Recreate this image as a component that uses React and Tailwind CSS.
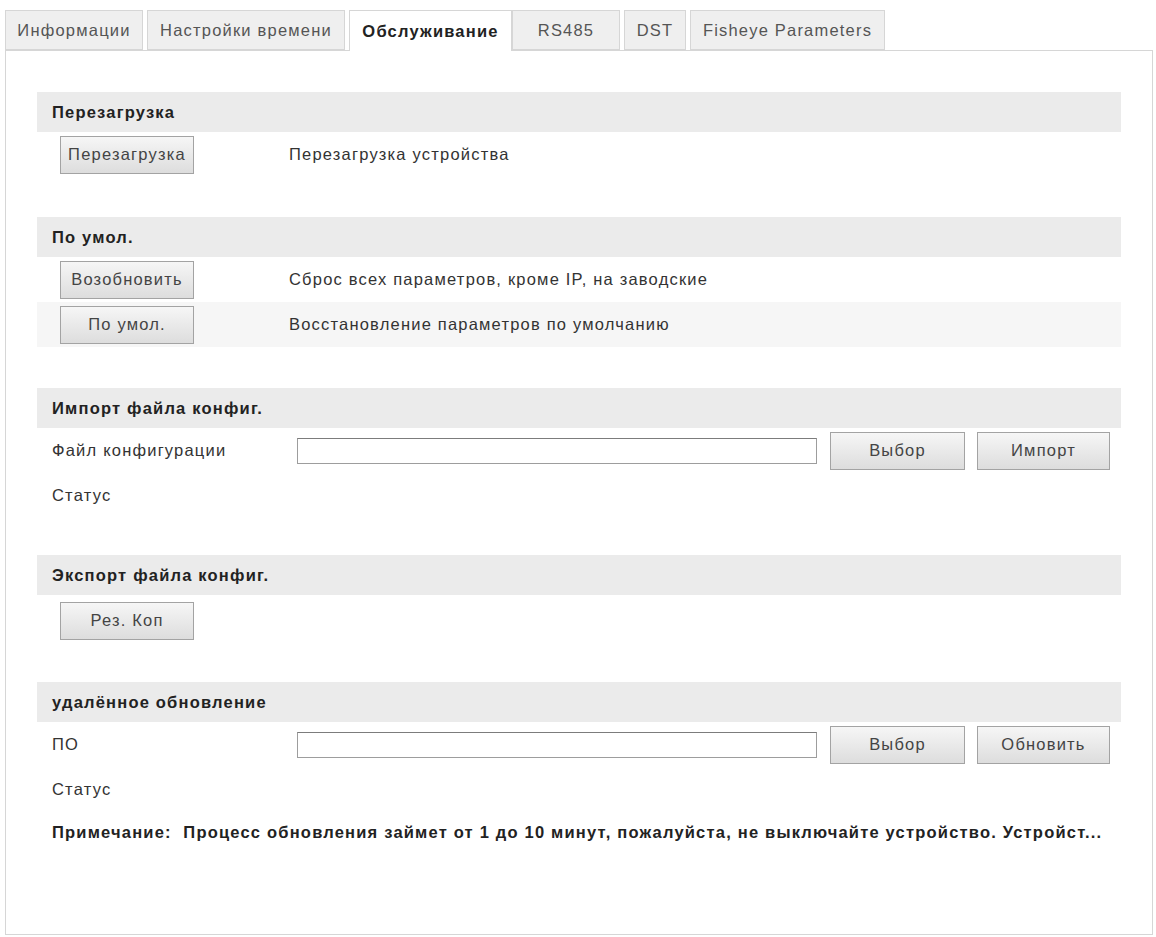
import React from 'react';

const tabs = [
  { label: 'Информации', w: 'w-[138px]' },
  { label: 'Настройки времени', w: 'w-[198px]' },
  { label: 'Обслуживание', w: 'w-[163px]', active: true },
  { label: 'RS485', w: 'w-[108px]' },
  { label: 'DST', w: 'w-[62px]' },
  { label: 'Fisheye Parameters', w: 'w-[195px]' },
];

const Btn = ({ children, className = '' }) => (
  <button
    className={`h-[38px] border border-[#a3a3a3] bg-gradient-to-b from-[#f6f6f6] to-[#dddddd] text-[#444] text-center whitespace-nowrap ${className}`}
  >
    {children}
  </button>
);

const Header = ({ children }) => (
  <div className="h-[40px] bg-[#ebebeb] flex items-center pl-[15px] font-bold text-[#222]">
    {children}
  </div>
);

const Input = () => (
  <div className="w-[520px] h-[26px] border border-[#9d9d9d] border-t-[#7c7c7c] bg-white" />
);

const FileRow = ({ label, action }) => (
  <div className="h-[45px] flex items-center">
    <span className="w-[260px] pl-[15px]">{label}</span>
    <Input />
    <Btn className="w-[135px] ml-[13px]">Выбор</Btn>
    <Btn className="w-[133px] ml-[12px]">{action}</Btn>
  </div>
);

const App = () => {
  return (
    <div
      className="w-[1156px] h-[937px] bg-white text-[16.5px] tracking-[1.2px] text-[#333] overflow-hidden"
      style={{ fontFamily: '"Liberation Sans", Arial, sans-serif' }}
    >
      {/* Tabs */}
      <div className="flex items-end pt-[10px] pl-[5px] h-[51px] relative z-10">
        {tabs.map((t, i) =>
          t.active ? (
            <div
              key={i}
              className={`${t.w} h-[41px] ml-[4px] border border-b-0 border-[#d6d6d6] bg-white flex items-center justify-center font-bold text-[#222]`}
            >
              {t.label}
            </div>
          ) : (
            <div
              key={i}
              className={`${t.w} h-[40px] mb-[1px] ${i === 0 || i === 3 ? 'ml-0' : 'ml-[4px]'} border border-[#d6d6d6] bg-[#efefef] flex items-center justify-center text-[#555] whitespace-nowrap`}
            >
              {t.label}
            </div>
          )
        )}
      </div>

      {/* Panel */}
      <div className="ml-[5px] w-[1148px] h-[885px] -mt-[1px] border border-[#d6d6d6] pt-[41px] pl-[31px] pr-[31px]">
        {/* Перезагрузка */}
        <Header>Перезагрузка</Header>
        <div className="h-[45px] flex items-center">
          <Btn className="w-[134px] ml-[23px]">Перезагрузка</Btn>
          <span className="ml-[95px]">Перезагрузка устройства</span>
        </div>

        {/* По умол. */}
        <div className="mt-[40px]">
          <Header>По умол.</Header>
          <div className="h-[45px] flex items-center">
            <Btn className="w-[134px] ml-[23px]">Возобновить</Btn>
            <span className="ml-[95px]">Сброс всех параметров, кроме IP, на заводские</span>
          </div>
          <div className="h-[45px] flex items-center bg-[#f6f6f6]">
            <Btn className="w-[134px] ml-[23px]">По умол.</Btn>
            <span className="ml-[95px]">Восстановление параметров по умолчанию</span>
          </div>
        </div>

        {/* Импорт */}
        <div className="mt-[41px]">
          <Header>Импорт файла конфиг.</Header>
          <FileRow label="Файл конфигурации" action="Импорт" />
          <div className="h-[45px] flex items-center pl-[15px]">Статус</div>
        </div>

        {/* Экспорт */}
        <div className="mt-[37px]">
          <Header>Экспорт файла конфиг.</Header>
          <div className="h-[47px] flex items-center pt-[4px]">
            <Btn className="w-[134px] ml-[23px]">Рез. Коп</Btn>
          </div>
        </div>

        {/* Обновление */}
        <div className="mt-[40px]">
          <Header>удалённое обновление</Header>
          <FileRow label="ПО" action="Обновить" />
          <div className="h-[45px] flex items-center pl-[15px]">Статус</div>
          <div className="h-[40px] flex items-center pl-[15px] font-bold text-[#222] whitespace-nowrap">
            Примечание:&nbsp; Процесс обновления займет от 1 до 10 минут, пожалуйста, не выключайте устройство. Устройст...
          </div>
        </div>
      </div>
    </div>
  );
};

export default App;
